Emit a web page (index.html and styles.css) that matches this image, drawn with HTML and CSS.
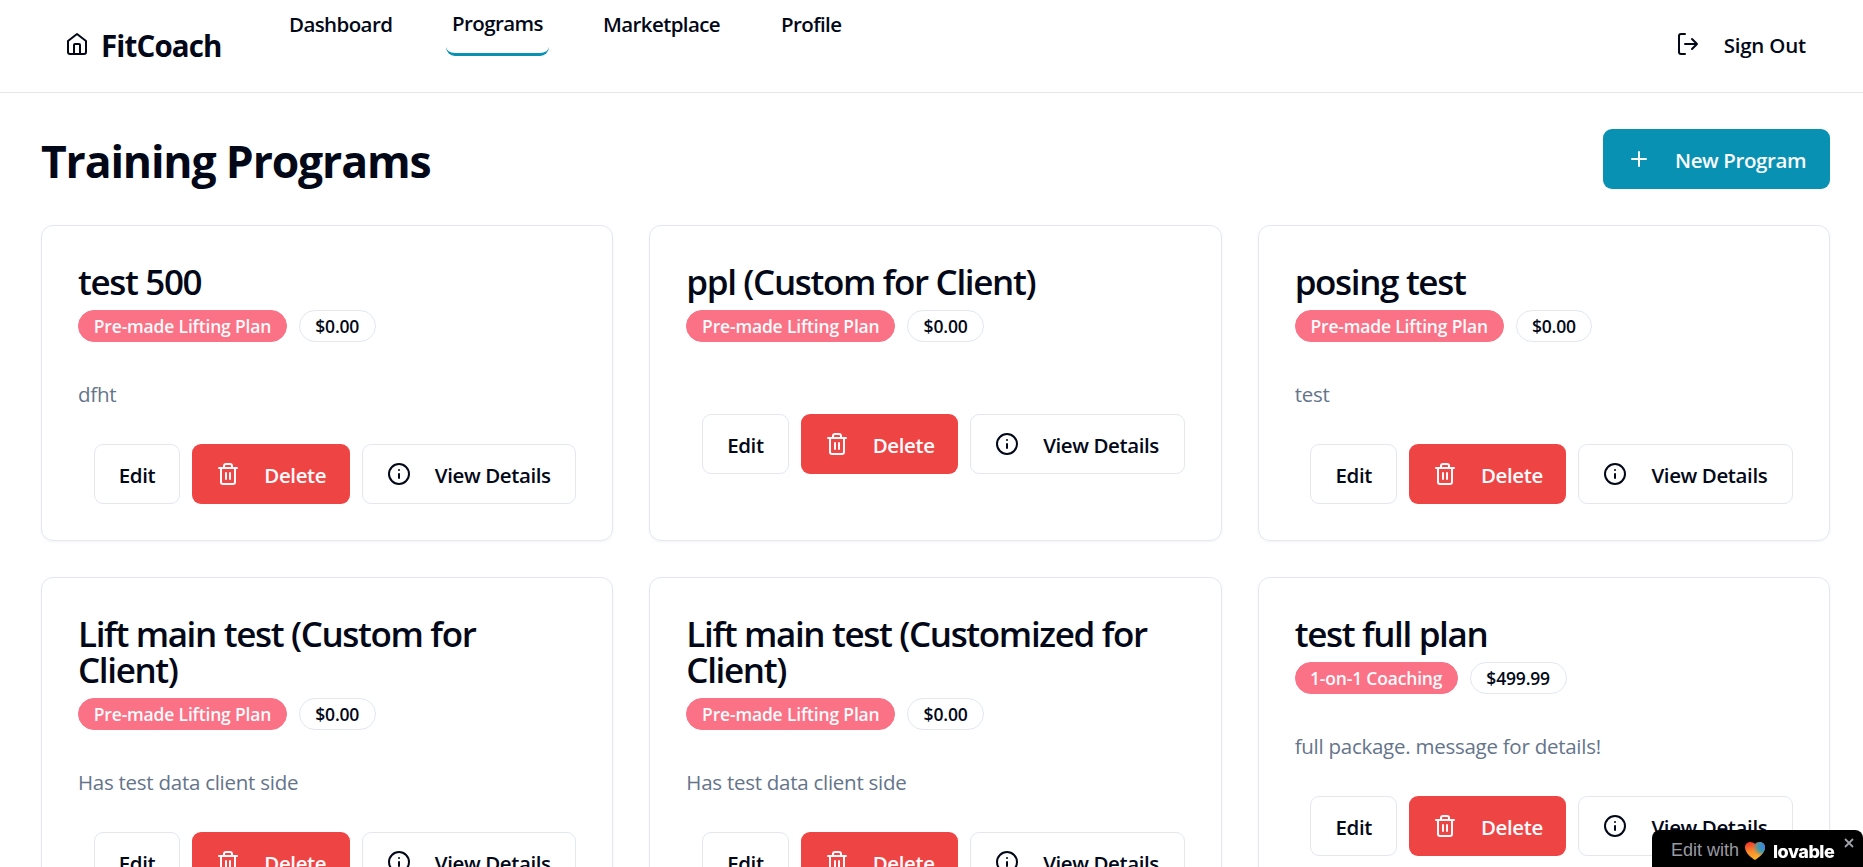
FILE: index.html
```html
<!DOCTYPE html>
<html lang="en">
<head>
<meta charset="utf-8">
<title>FitCoach</title>
<link rel="stylesheet" href="styles.css">
</head>
<body>
<svg class="sprite" aria-hidden="true">
  <symbol id="trash" viewBox="0 0 24 24"><path d="M3 6h18M19 6v14a2 2 0 0 1-2 2H7a2 2 0 0 1-2-2V6M8 6V4a2 2 0 0 1 2-2h4a2 2 0 0 1 2 2v2M10 11v6M14 11v6"/></symbol>
  <symbol id="info" viewBox="0 0 24 24"><circle cx="12" cy="12" r="10"/><path d="M12 16v-4M12 8h.01"/></symbol>
</svg>
<header class="topbar">
  <a class="brand"><svg class="icon" viewBox="0 0 24 24"><path d="M3 9l9-7 9 7v11a2 2 0 0 1-2 2H5a2 2 0 0 1-2-2z"/><path d="M9 22V13a1 1 0 0 1 1-1h4a1 1 0 0 1 1 1v9"/></svg><span>FitCoach</span></a>
  <nav class="nav">
    <a class="dashboard">Dashboard</a>
    <a class="active">Programs</a>
    <a class="marketplace">Marketplace</a>
    <a class="profile">Profile</a>
  </nav>
  <a class="signout"><svg class="icon" viewBox="0 0 24 24"><path d="M9 2H5a2 2 0 0 0-2 2v16a2 2 0 0 0 2 2h4M16 17l5-5-5-5M21 12H9"/></svg><span>Sign Out</span></a>
</header>
<main class="page">
  <div class="heading">
    <h1>Training Programs</h1>
    <button class="btn primary"><svg class="icon" viewBox="0 0 24 24"><path d="M5 12h14M12 5v14"/></svg><span>New Program</span></button>
  </div>
  <section class="grid">
    <article class="card">
      <h2>test 500</h2>
      <div class="badges"><span class="badge plan">Pre-made Lifting Plan</span><span class="badge price">$0.00</span></div>
      <p class="desc">dfht</p>
      <div class="actions"><button class="btn edit">Edit</button><button class="btn delete"><svg class="icon"><use href="#trash"/></svg><span>Delete</span></button><button class="btn view"><svg class="icon"><use href="#info"/></svg><span>View Details</span></button></div>
    </article>
    <article class="card">
      <h2>ppl (Custom for Client)</h2>
      <div class="badges"><span class="badge plan">Pre-made Lifting Plan</span><span class="badge price">$0.00</span></div>
      <p class="desc"></p>
      <div class="actions"><button class="btn edit">Edit</button><button class="btn delete"><svg class="icon"><use href="#trash"/></svg><span>Delete</span></button><button class="btn view"><svg class="icon"><use href="#info"/></svg><span>View Details</span></button></div>
    </article>
    <article class="card">
      <h2>posing test</h2>
      <div class="badges"><span class="badge plan">Pre-made Lifting Plan</span><span class="badge price">$0.00</span></div>
      <p class="desc">test</p>
      <div class="actions"><button class="btn edit">Edit</button><button class="btn delete"><svg class="icon"><use href="#trash"/></svg><span>Delete</span></button><button class="btn view"><svg class="icon"><use href="#info"/></svg><span>View Details</span></button></div>
    </article>
    <article class="card">
      <h2>Lift main test (Custom for<br>Client)</h2>
      <div class="badges"><span class="badge plan">Pre-made Lifting Plan</span><span class="badge price">$0.00</span></div>
      <p class="desc">Has test data client side</p>
      <div class="actions"><button class="btn edit">Edit</button><button class="btn delete"><svg class="icon"><use href="#trash"/></svg><span>Delete</span></button><button class="btn view"><svg class="icon"><use href="#info"/></svg><span>View Details</span></button></div>
    </article>
    <article class="card">
      <h2>Lift main test (Customized for<br>Client)</h2>
      <div class="badges"><span class="badge plan">Pre-made Lifting Plan</span><span class="badge price">$0.00</span></div>
      <p class="desc">Has test data client side</p>
      <div class="actions"><button class="btn edit">Edit</button><button class="btn delete"><svg class="icon"><use href="#trash"/></svg><span>Delete</span></button><button class="btn view"><svg class="icon"><use href="#info"/></svg><span>View Details</span></button></div>
    </article>
    <article class="card">
      <h2>test full plan</h2>
      <div class="badges"><span class="badge coaching">1-on-1 Coaching</span><span class="badge price-long">$499.99</span></div>
      <p class="desc">full package. message for details!</p>
      <div class="actions"><button class="btn edit">Edit</button><button class="btn delete"><svg class="icon"><use href="#trash"/></svg><span>Delete</span></button><button class="btn view"><svg class="icon"><use href="#info"/></svg><span>View Details</span></button></div>
    </article>
  </section>
</main>
<aside class="lovable">
  <span class="edit-with">Edit with</span>
  <svg class="heart" viewBox="0 0 20 18">
    <defs>
      <linearGradient id="warm" x1="0" y1="0" x2="0.35" y2="1"><stop offset="0.1" stop-color="#f0372b"/><stop offset="0.55" stop-color="#f98a2b"/><stop offset="1" stop-color="#fbb02c"/></linearGradient>
      <radialGradient id="cool" cx="0.95" cy="0.25" r="0.58"><stop offset="0" stop-color="#3f7fe8"/><stop offset="0.5" stop-color="#3d9aaf"/><stop offset="1" stop-color="#3d9aaf" stop-opacity="0"/></radialGradient>
    </defs>
    <path fill="url(#warm)" d="M10 18C7 16 0 11 0 5.4C0 2.4 2.3 0 5.2 0C7.3 0 9 .8 10 2C11 .8 12.7 0 14.8 0C17.7 0 20 2.4 20 5.400C20 11 13 16 10 18Z"/>
    <path fill="url(#cool)" d="M10 18C7 16 0 11 0 5.4C0 2.4 2.3 0 5.2 0C7.3 0 9 .8 10 2C11 .8 12.7 0 14.8 0C17.7 0 20 2.4 20 5.400C20 11 13 16 10 18Z"/>
  </svg>
  <span class="wordmark">lovable</span>
  <svg class="close" viewBox="0 0 10 10"><path d="M1 1l8 8M9 1l-8 8"/></svg>
</aside>
</body>
</html>
```
FILE: styles.css
```css
* { box-sizing: border-box; }
body {
  margin: 0;
  height: 867px;
  overflow: hidden;
  background: #fff;
  color: #020817;
  font-family: "Open Sans", "Noto Sans", sans-serif;
  font-size: 20.5px;
}
h1, h2, p { margin: 0; }
.sprite { display: none; }
.icon {
  width: 24px;
  height: 24px;
  flex: none;
  fill: none;
  stroke: currentColor;
  stroke-width: 2;
  stroke-linecap: round;
  stroke-linejoin: round;
}

.topbar {
  display: flex;
  height: 93px;
  padding: 0 57px 0 65px;
  border-bottom: 1px solid #e2e8f0;
  font-weight: 600;
  letter-spacing: -0.6px;
}
.brand {
  display: flex;
  align-items: center;
  width: 216px;
  font-size: 29.5px;
  font-weight: 700;
  letter-spacing: -0.85px;
}
.brand .icon { margin: -5px 12px 0 0; }
.brand span { padding-bottom: 2px; }
.nav { display: flex; align-items: flex-start; }
.nav a { height: 57px; padding: 10px 0 0 8px; line-height: 28px; white-space: nowrap; }
.nav .dashboard { width: 165px; }
.nav .active {
  width: 103px;
  height: 56px;
  padding: 9px 0 0 6px;
  border-bottom: 3px solid #0891b2;
  border-radius: 9px;
}
.nav .marketplace { width: 178px; padding-left: 9px; margin-left: 45px; }
.nav .profile { padding-left: 9px; }
.signout { display: flex; align-items: center; gap: 24px; margin-left: auto; letter-spacing: -0.2px; }
.signout .icon { margin-top: -4px; }
.signout span { padding-bottom: 2px; }

.page { padding: 36px 33px 36px 41px; }
.heading { display: flex; justify-content: space-between; align-items: center; height: 60px; }
h1 { font-size: 44.5px; font-weight: 700; line-height: 60px; margin-top: 4px; letter-spacing: -1.15px; }
.btn {
  display: flex;
  align-items: center;
  gap: 24px;
  height: 60px;
  padding: 1px 0 0 24px;
  border: 0;
  border-radius: 9px;
  background: #fff;
  color: inherit;
  font: 600 20.5px/28px "Open Sans", "Noto Sans", sans-serif;
  letter-spacing: -0.4px;
  white-space: nowrap;
}
.btn .icon { margin-top: -2px; }
.primary { width: 227px; background: #0891b2; color: #f8fafc; }

.grid { display: grid; grid-template-columns: repeat(3, 1fr); gap: 36px; margin-top: 36px; }
.card {
  padding: 36px;
  border: 1px solid #e2e8f0;
  border-radius: 12px;
  box-shadow: 0 1px 3px rgba(0, 0, 0, 0.05);
}
h2 {
  padding-top: 2px;
  font-size: 35px;
  font-weight: 600;
  line-height: 36px;
  white-space: nowrap;
  letter-spacing: -1.35px;
}
.badges { display: flex; gap: 12px; margin-top: 10px; }
.badge {
  height: 32px;
  border: 1px solid #e2e8f0;
  border-radius: 16px;
  font-size: 17.5px;
  font-weight: 600;
  letter-spacing: -0.18px;
  line-height: 30px;
  text-align: center;
  white-space: nowrap;
}
.plan, .coaching { background: #fb7185; border-color: #fb7185; color: #f8fafc; }
.plan { width: 209px; }
.coaching { width: 163px; }
.price { width: 76.5px; }
.price-long { width: 97px; }
.desc { padding: 37px 0 35px; color: #64748b; line-height: 30px; letter-spacing: -0.26px; }
.actions { display: flex; justify-content: flex-end; gap: 12px; }
.edit { width: 86.5px; border: 1px solid #e2e8f0; }
.delete { width: 157.5px; background: #ef4444; color: #f8fafc; }
.view { width: 214.5px; border: 1px solid #e2e8f0; }

.lovable {
  position: fixed;
  right: 0;
  bottom: 0;
  display: flex;
  width: 211px;
  height: 37px;
  padding: 0 9px 0 19px;
  border-radius: 8px 8px 0 0;
  background: #000;
}
.edit-with { width: 74px; color: #9a9aa2; font: 18px/41px "Liberation Sans", sans-serif; white-space: nowrap; }
.heart { width: 20px; height: 18px; margin-top: 12px; }
.wordmark { margin-left: 8px; color: #fff; font: 800 18px/43px Inter, sans-serif; letter-spacing: -0.5px; }
.close { width: 10px; height: 10px; margin: 8px 0 0 auto; stroke: #a1a1aa; stroke-width: 1.8; }
```
